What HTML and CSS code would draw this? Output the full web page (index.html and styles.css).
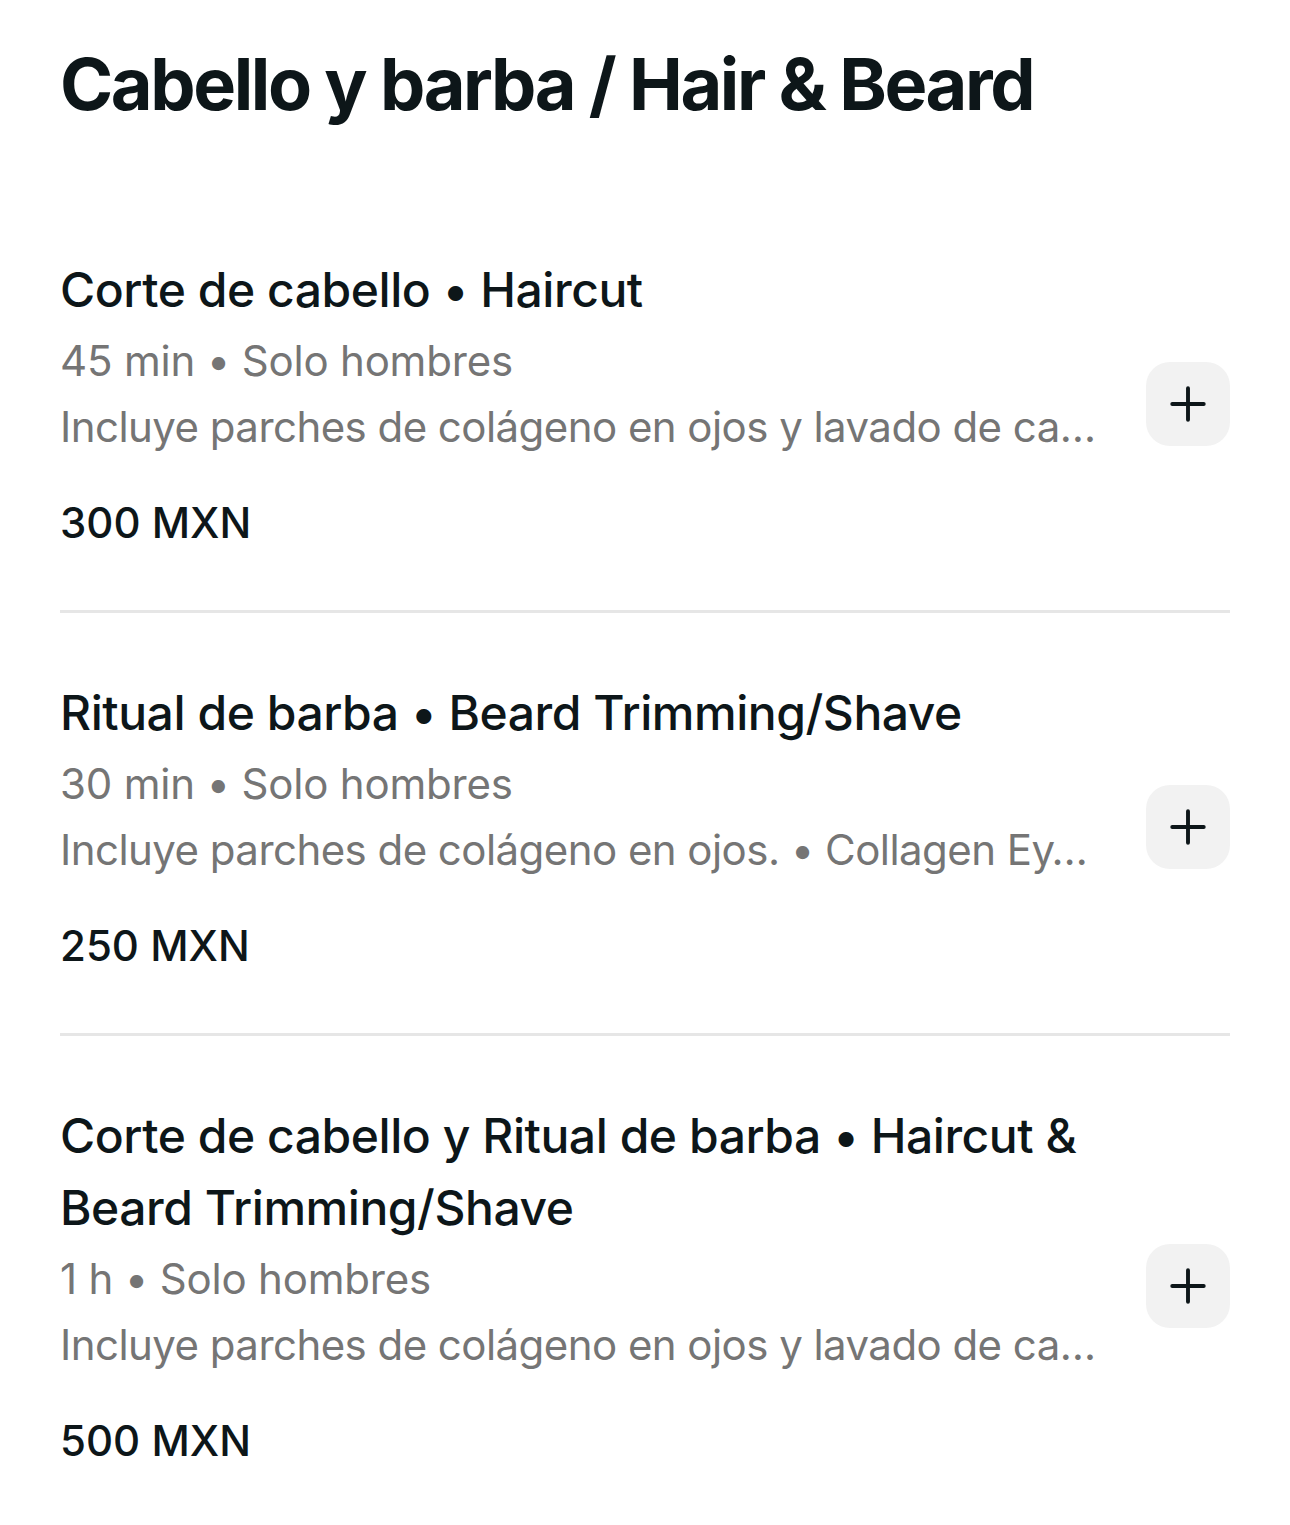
FILE: index.html
```html
<!DOCTYPE html>
<html lang="es">
<head>
<meta charset="utf-8">
<title>Cabello y barba / Hair &amp; Beard</title>
<link rel="stylesheet" href="styles.css">
</head>
<body>
<main class="page">
  <h1 class="section-title">Cabello y barba / Hair &amp; Beard</h1>
  <ul class="services">
    <li class="service">
      <div class="service-info">
        <div class="service-name">Corte de cabello • Haircut</div>
        <div class="service-meta">45 min • Solo hombres</div>
        <div class="service-desc">Incluye parches de colágeno en ojos y lavado de ca…</div>
        <div class="service-price">300 MXN</div>
      </div>
      <button class="add-btn" aria-label="Añadir">
        <svg viewBox="0 0 24 24" width="36" height="36"><path d="M12 1.5v21M1.5 12h21" fill="none" stroke="currentColor" stroke-width="2.6" stroke-linecap="round"/></svg>
      </button>
    </li>
    <li class="service">
      <div class="service-info">
        <div class="service-name">Ritual de barba • Beard Trimming/Shave</div>
        <div class="service-meta">30 min • Solo hombres</div>
        <div class="service-desc">Incluye parches de colágeno en ojos. • Collagen Ey…</div>
        <div class="service-price">250 MXN</div>
      </div>
      <button class="add-btn" aria-label="Añadir">
        <svg viewBox="0 0 24 24" width="36" height="36"><path d="M12 1.5v21M1.5 12h21" fill="none" stroke="currentColor" stroke-width="2.6" stroke-linecap="round"/></svg>
      </button>
    </li>
    <li class="service">
      <div class="service-info">
        <div class="service-name">Corte de cabello y Ritual de barba • Haircut &amp; Beard Trimming/Shave</div>
        <div class="service-meta">1 h • Solo hombres</div>
        <div class="service-desc">Incluye parches de colágeno en ojos y lavado de ca…</div>
        <div class="service-price">500 MXN</div>
      </div>
      <button class="add-btn" aria-label="Añadir">
        <svg viewBox="0 0 24 24" width="36" height="36"><path d="M12 1.5v21M1.5 12h21" fill="none" stroke="currentColor" stroke-width="2.6" stroke-linecap="round"/></svg>
      </button>
    </li>
  </ul>
</main>
</body>
</html>
```

FILE: styles.css
```css
* { box-sizing: border-box; }
html, body { margin: 0; padding: 0; background: #ffffff; }
body {
  font-family: Inter, "Noto Sans", "Liberation Sans", sans-serif;
  color: #0d1619;
}
.page {
  padding: 36px 60px 0 60px;
}
.section-title {
  margin: 0;
  font-size: 72px;
  line-height: 96px;
  font-weight: 700;
  letter-spacing: -2.4px;
}
.services {
  list-style: none;
  margin: 58px 0 0 0;
  padding: 0;
}
.service {
  display: flex;
  align-items: center;
  gap: 36px;
  padding: 64px 0 57px 0;
  border-bottom: 3px solid #e6e6e6;
}
.service:last-child { border-bottom: none; }
.service-info {
  flex: 1;
  min-width: 0;
}
.service-name {
  font-size: 48px;
  line-height: 72px;
  font-weight: 500;
  letter-spacing: -0.45px;
}
.service-meta {
  margin-top: 2px;
  font-size: 42px;
  line-height: 66px;
  color: #757575;
  letter-spacing: -0.2px;
}
.service-desc {
  font-size: 42px;
  line-height: 66px;
  color: #757575;
  letter-spacing: -0.55px;
  white-space: nowrap;
  overflow: hidden;
  text-overflow: ellipsis;
}
.service-price {
  margin-top: 33px;
  font-size: 42px;
  line-height: 60px;
  font-weight: 500;
}
.add-btn {
  flex: none;
  width: 84px;
  height: 84px;
  border: none;
  border-radius: 24px;
  background: #f2f2f2;
  color: #0d1619;
  display: flex;
  align-items: center;
  justify-content: center;
  padding: 0;
}
```
